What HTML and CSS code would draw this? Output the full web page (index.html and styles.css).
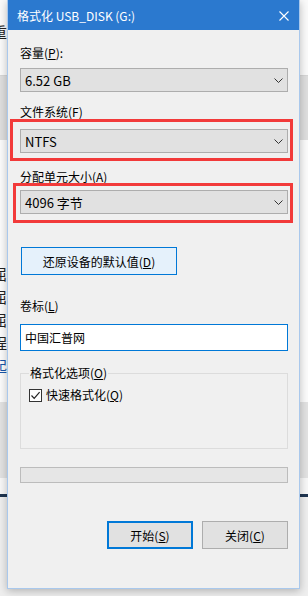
FILE: index.html
```html
<!DOCTYPE html>
<html lang="zh-CN">
<head>
    <meta charset="UTF-8">
    <meta name="viewport" content="width=device-width, initial-scale=1.0">
    <title>格式化 USB_DISK (G:)</title>
    <link rel="stylesheet" href="styles.css">
</head>
<body>
    <div class="backdrop">
        <div class="bd-row bd-top"><span class="frag">重</span></div>
        <div class="bd-row bd-band"></div>
        <div class="bd-row bd-list">
            <span class="frag">屈</span>
            <span class="frag">屈</span>
            <span class="frag">屈</span>
            <span class="frag">程</span>
            <span class="frag link">起</span>
        </div>
        <div class="bd-row bd-band2"></div>
        <div class="bd-row bd-white"></div>
        <div class="bd-row bd-dark"></div>
        <div class="bd-row bd-bottom"></div>
    </div>

    <div class="dialog">
        <div class="titlebar">
            <span class="title">格式化 USB_DISK (G:)</span>
            <svg class="close" width="10" height="10" viewBox="0 0 10 10">
                <path d="M0.5 0.5 L9.5 9.5 M9.5 0.5 L0.5 9.5" stroke="#fff" stroke-width="1.1" fill="none"/>
            </svg>
        </div>

        <div class="content">
            <div class="label first">容量(<u>P</u>):</div>
            <div class="combo">
                <span>6.52 GB</span>
                <svg class="chev" width="9" height="5" viewBox="0 0 9 5"><path d="M0.5 0.5 L4.5 4.5 L8.5 0.5" stroke="#333" fill="none"/></svg>
            </div>

            <div class="label l-fs">文件系统(F)</div>
            <div class="combo c-fs">
                <span>NTFS</span>
                <svg class="chev" width="9" height="5" viewBox="0 0 9 5"><path d="M0.5 0.5 L4.5 4.5 L8.5 0.5" stroke="#333" fill="none"/></svg>
            </div>

            <div class="label l-unit">分配单元大小(<u>A</u>)</div>
            <div class="combo c-unit">
                <span>4096 字节</span>
                <svg class="chev" width="9" height="5" viewBox="0 0 9 5"><path d="M0.5 0.5 L4.5 4.5 L8.5 0.5" stroke="#333" fill="none"/></svg>
            </div>

            <button class="restore">还原设备的默认值(<u>D</u>)</button>

            <div class="label l-vol">卷标(<u>L</u>)</div>
            <div class="textbox">中国汇普网</div>

            <fieldset class="options">
                <legend>格式化选项(<u>O</u>)</legend>
                <label class="check">
                    <span class="box">
                        <svg width="11" height="11" viewBox="0 0 11 11">
                            <path d="M1.5 5.5 L4.2 8.3 L9.6 2.2" stroke="#222" stroke-width="1.2" fill="none"/>
                        </svg>
                    </span>
                    <span>快速格式化(<u>Q</u>)</span>
                </label>
            </fieldset>

            <div class="progress"></div>

            <div class="actions">
                <button class="btn primary">开始(<u>S</u>)</button>
                <button class="btn">关闭(<u>C</u>)</button>
            </div>
        </div>
    </div>

    <div class="mark mark-fs"></div>
    <div class="mark mark-unit"></div>
</body>
</html>
```

FILE: styles.css
```css
* {
    box-sizing: border-box;
}

body {
    margin: 0;
    width: 308px;
    height: 596px;
    overflow: hidden;
    position: relative;
    font-family: "Noto Sans CJK SC", "Noto Sans", sans-serif;
    font-size: 12px;
    color: #000;
    background: #f2f2f2;
}

/* window behind the dialog */
.backdrop {
    display: flex;
    flex-direction: column;
    height: 596px;
}

.bd-top {
    height: 76px;
    background: #fafafa;
    border-bottom: 1px solid #d6d6d6;
    padding: 24px 0 0 0;
}

.bd-band {
    height: 64px;
    background: #dedede;
}

.bd-list {
    height: 262px;
    background: #fbfbfb;
    display: flex;
    flex-direction: column;
    padding-top: 126px;
    gap: 7px;
}

.frag {
    font-size: 15px;
    line-height: 16px;
    margin-left: -8px;
    color: #222;
}

.frag.link {
    color: #1a56a8;
}

.bd-band2 {
    height: 76px;
    background: #e2e2e2;
}

.bd-white {
    height: 16px;
    background: #f7f7f7;
}

.bd-dark {
    height: 3px;
    background: #1f3550;
}

.bd-bottom {
    flex: 1;
    background: #eeeeee;
}

/* dialog */
.dialog {
    position: absolute;
    left: 7px;
    top: 0;
    width: 293px;
    height: 589px;
    background: #f0f0f0;
    border: 1px solid #a9c8ec;
    border-top: none;
    box-shadow: 0 2px 8px rgba(0, 0, 0, 0.25);
}

.titlebar {
    height: 30px;
    background: #2b79cf;
    color: #fff;
    display: flex;
    align-items: center;
    justify-content: space-between;
    padding: 0 10px 0 9px;
}

.title {
    font-size: 12px;
    line-height: 16px;
    margin-top: 1px;
}

.close {
    display: block;
    margin-top: 1px;
}

.content {
    padding: 15px 11px 0 12px;
}

.label {
    line-height: 16px;
    height: 16px;
}

u {
    text-decoration-thickness: 1px;
    text-underline-offset: 1px;
}

.combo {
    height: 24px;
    margin-top: 7px;
    background: #e1e1e1;
    border: 1px solid #adadad;
    display: flex;
    align-items: center;
    justify-content: space-between;
    padding: 0 4px 0 4px;
    font-size: 13px;
}

.chev {
    display: block;
}

.l-fs {
    margin-top: 12px;
}

.c-fs {
    margin-top: 9px;
}

.l-unit {
    margin-top: 16px;
}

.c-unit {
    margin-top: 5px;
}

.restore {
    display: block;
    margin: 33px 0 0 1px;
    width: 156px;
    height: 28px;
    background: #e5f1fb;
    border: 1px solid #0078d7;
    font-family: inherit;
    font-size: 12px;
    padding: 0;
    color: #000;
}

.l-vol {
    margin-top: 23px;
}

.textbox {
    margin-top: 10px;
    height: 27px;
    background: #fff;
    border: 1px solid #0078d7;
    padding: 0 4px;
    line-height: 25px;
    font-size: 12px;
}

.options {
    margin: 14px 0 0 0;
    height: 84px;
    border: 1px solid #dcdcdc;
    padding: 6px 8px 0 8px;
}

.options legend {
    padding: 0 1px;
    line-height: 16px;
}

.check {
    display: flex;
    align-items: center;
    gap: 4px;
    line-height: 16px;
}

.box {
    width: 13px;
    height: 13px;
    border: 1px solid #333;
    background: #fff;
    display: flex;
    align-items: center;
    justify-content: center;
}

.box svg {
    display: block;
}

.progress {
    margin-top: 18px;
    height: 16px;
    background: #e6e6e6;
    border: 1px solid #bcbcbc;
}

.actions {
    margin-top: 38px;
    display: flex;
    justify-content: flex-end;
    gap: 9px;
}

.btn {
    width: 86px;
    height: 28px;
    background: #e1e1e1;
    border: 1px solid #adadad;
    font-family: inherit;
    font-size: 12px;
    color: #000;
    padding: 0;
}

.btn.primary {
    border: 2px solid #0078d7;
}

/* red annotation frames */
.mark {
    position: absolute;
    border: 3px solid #f23a3a;
}

.mark-fs {
    left: 10px;
    top: 119px;
    width: 283px;
    height: 42px;
}

.mark-unit {
    left: 13px;
    top: 183px;
    width: 280px;
    height: 40px;
}
```
